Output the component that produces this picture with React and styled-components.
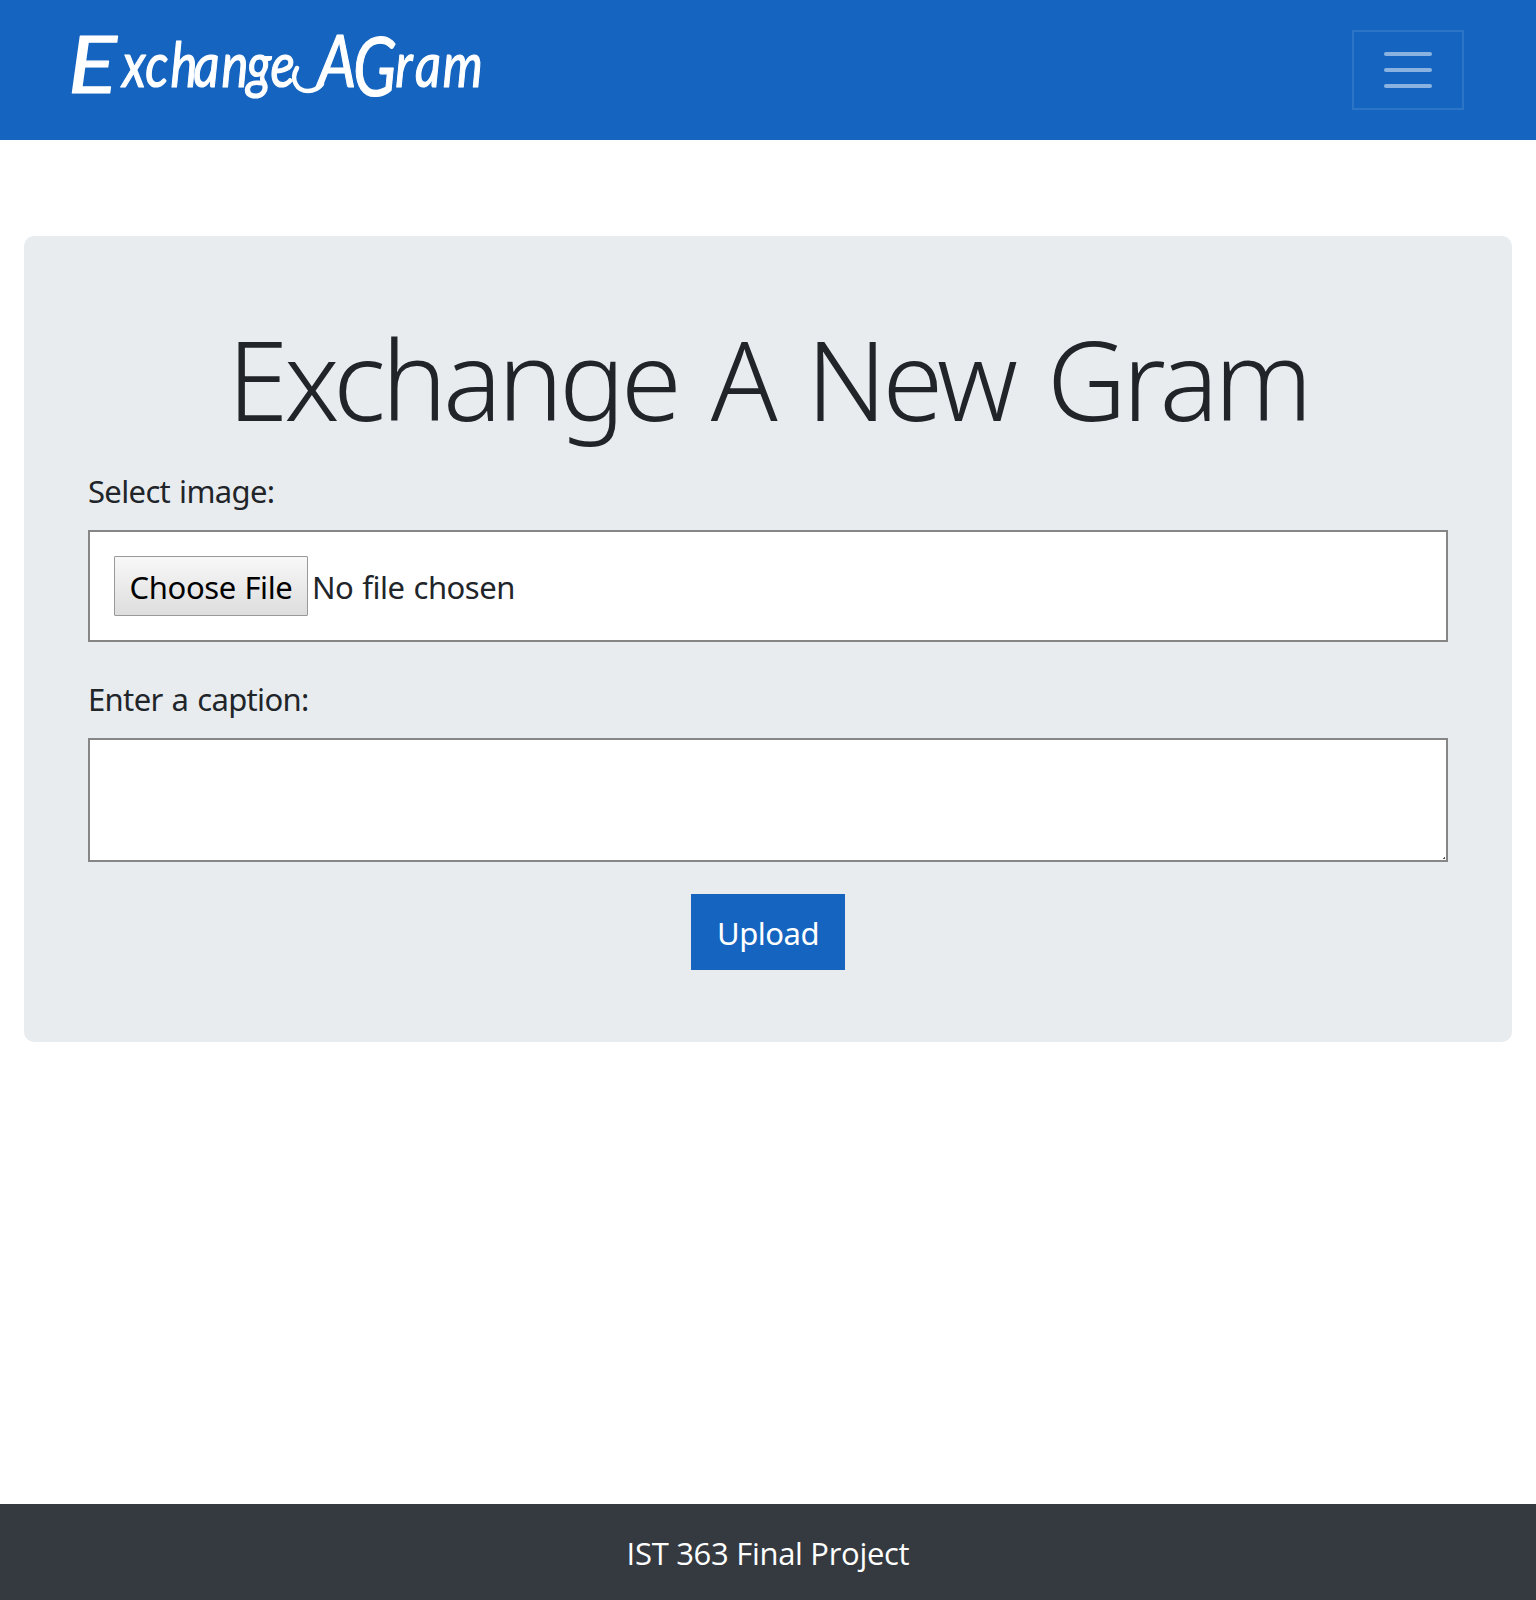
import React from "react";
import styled, { createGlobalStyle } from "styled-components";

const GlobalStyle = createGlobalStyle`
  *, *::before, *::after { box-sizing: border-box; }
  body {
    margin: 0;
    background: #fff;
    color: #212529;
    font-family: "Noto Sans", "Open Sans", sans-serif;
    font-size: 31px;
    line-height: 48px;
  }
`;

const Page = styled.div`
  display: flex;
  flex-direction: column;
  min-height: 1600px;
`;

const Navbar = styled.header`
  display: flex;
  align-items: center;
  justify-content: space-between;
  height: 140px;
  padding: 0 72px;
  background: #1565c0;
`;

const Logo = styled.svg`
  display: block;
  width: 410px;
  height: 80px;
  overflow: visible;
  fill: #fff;
  stroke: #fff;
  stroke-width: 1.2px;
  stroke-linejoin: round;
  font-family: Lato, sans-serif;
  font-style: italic;
`;

const Swash = styled.path`
  fill: none;
  stroke-width: 4.5px;
  stroke-linecap: round;
`;

const Toggler = styled.button`
  display: flex;
  flex-direction: column;
  align-items: center;
  justify-content: center;
  gap: 12px;
  width: 112px;
  height: 80px;
  padding: 0;
  border: 2px solid rgba(255, 255, 255, 0.1);
  background: transparent;
`;

const Bar = styled.span`
  width: 48px;
  height: 4px;
  border-radius: 2px;
  background: rgba(255, 255, 255, 0.5);
`;

const Card = styled.main`
  display: flex;
  flex-direction: column;
  height: 806px;
  margin: 96px 24px 0;
  padding: 75px 64px 0;
  border-radius: 10px;
  background: #e8ecef;
`;

const Title = styled.h1`
  margin: 0 0 22px;
  font-size: 110px;
  font-weight: 300;
  line-height: 134px;
  text-align: center;
  white-space: nowrap;
  letter-spacing: -4.1px;
  word-spacing: 8.5px;
`;

const Label = styled.label`
  display: block;
  height: 63px;
  letter-spacing: -0.65px;
  word-spacing: 1.5px;
`;

const FileField = styled.div`
  display: flex;
  align-items: center;
  gap: 4px;
  height: 112px;
  margin-bottom: 33px;
  padding: 0 24px;
  border: 2px solid #868686;
  background: #fff;
`;

const FileButton = styled.button`
  width: 194px;
  height: 60px;
  padding: 2px 0 0;
  border: 1px solid #999;
  border-radius: 1px;
  background: linear-gradient(#f8f8f8, #dddddd);
  color: #000;
  font: inherit;
  line-height: 48px;
  white-space: nowrap;
  letter-spacing: -0.4px;
  word-spacing: 1px;
`;

const FileStatus = styled.span`
  padding-top: 2px;
  letter-spacing: -0.5px;
  word-spacing: 1.5px;
`;

const CaptionField = styled.div`
  position: relative;
  height: 124px;
  margin-bottom: 32px;
`;

const Caption = styled.textarea`
  display: block;
  width: 100%;
  height: 100%;
  padding: 12px 24px;
  border: 2px solid #868686;
  border-radius: 0;
  background: #fff;
  font: inherit;
  resize: none;
`;

const Grip = styled.span`
  position: absolute;
  right: 3px;
  bottom: 3px;
  width: 2px;
  height: 2px;
  background: linear-gradient(135deg, #fff 30%, #555 30%);
`;

const Upload = styled.button`
  align-self: center;
  width: 154px;
  height: 76px;
  padding: 2px 0 0;
  border: 0;
  background: #1565c0;
  color: #fff;
  font: inherit;
  letter-spacing: -0.5px;
`;

const Footer = styled.footer`
  display: flex;
  align-items: center;
  justify-content: center;
  height: 96px;
  margin-top: auto;
  padding-top: 2px;
  background: #343a40;
  color: #fff;
  font-family: "Open Sans", sans-serif;
  letter-spacing: -0.3px;
`;

function Wordmark() {
  return (
    <Logo viewBox="72 30 410 80" role="img" aria-label="ExchangeAGram">
      <text transform="translate(68 93) scale(1.15 1)" fontSize="79">E</text>
      <text transform="translate(0 87) scale(0.82 1)" fontSize="62" x="149 177 208 236 270 301 330">
        xchange
      </text>
      <Swash d="M297 68 C290 80 297 91 308 91 C314 91 318 89 322 84" />
      <text transform="translate(318 87) scale(0.85 1)" fontSize="71">A</text>
      <text transform="translate(353 96) scale(0.78 1)" fontSize="82">G</text>
      <text transform="translate(0 87) scale(0.82 1)" fontSize="62" x="482 506 540">
        ram
      </text>
    </Logo>
  );
}

export default function App() {
  return (
    <>
      <GlobalStyle />
      <Page>
        <Navbar>
          <Wordmark />
          <Toggler type="button" aria-label="Toggle navigation">
            <Bar />
            <Bar />
            <Bar />
          </Toggler>
        </Navbar>
        <Card>
          <Title>Exchange A New Gram</Title>
          <Label>Select image:</Label>
          <FileField>
            <FileButton type="button">Choose File</FileButton>
            <FileStatus>No file chosen</FileStatus>
          </FileField>
          <Label htmlFor="caption">Enter a caption:</Label>
          <CaptionField>
            <Caption id="caption" />
            <Grip />
          </CaptionField>
          <Upload type="button">Upload</Upload>
        </Card>
        <Footer>IST 363 Final Project</Footer>
      </Page>
    </>
  );
}
